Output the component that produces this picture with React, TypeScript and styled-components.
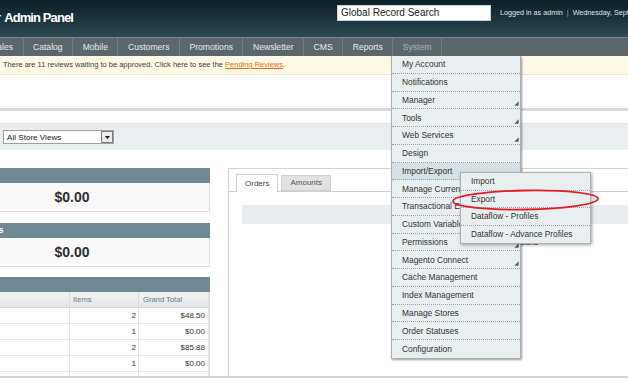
import React from "react";
import styled, { createGlobalStyle } from "styled-components";

const GlobalStyle = createGlobalStyle`
  * { box-sizing: border-box; }
  html, body { margin: 0; padding: 0; background: #fff; }
  body {
    width: 628px;
    height: 381px;
    overflow: hidden;
    font-family: "Liberation Sans", Arial, sans-serif;
    color: #333;
  }
`;

const Page = styled.div`
  position: relative;
  width: 628px;
  height: 381px;
  overflow: hidden;
  display: flex;
  flex-direction: column;
`;

const Header = styled.header`
  height: 37px;
  flex: none;
  display: grid;
  grid-template-columns: 337px 154px 1fr;
  align-items: start;
  padding-top: 5px;
  background: linear-gradient(180deg, #0d1f28 0%, #1b333c 50%, #2e4a54 100%);
  white-space: nowrap;
  overflow: hidden;
`;

const Title = styled.h1`
  margin: 6px 0 0 -4px;
  font-size: 13px;
  line-height: 14px;
  font-weight: bold;
  letter-spacing: -0.9px;
  color: #fff;
`;

const TitleCut = styled.span`
  margin-right: 4px;
`;

const SearchBox = styled.div`
  width: 154px;
  height: 16px;
  border: 1px solid #c9d1d4;
  background: #fff;
  font-size: 10px;
  line-height: 14px;
  color: #222;
  padding-left: 3px;
  overflow: hidden;
`;

const UserInfo = styled.div`
  padding-left: 9px;
  font-size: 7.2px;
  line-height: 16px;
  color: #dfe6e9;
  overflow: hidden;
`;

const Sep = styled.span`
  color: #8fa0a7;
  margin: 0 4px;
`;

const Nav = styled.nav`
  height: 19px;
  flex: none;
  display: flex;
  background: #5c676c;
  border-top: 1px solid #7a868b;
  overflow: hidden;
`;

const NavItem = styled.div<{ $active?: boolean; $offset?: number }>`
  flex: none;
  padding: 0 9.5px;
  margin-left: ${(p) => p.$offset ?? 0}px;
  border-right: 1px solid #727d82;
  font-size: 8.6px;
  line-height: 18px;
  color: ${(p) => (p.$active ? "#a9b4b9" : "#e4e9eb")};
  white-space: nowrap;
`;

const Notice = styled.div`
  height: 19px;
  flex: none;
  background: #fff9e6;
  border-bottom: 1px solid #ede4c8;
  font-size: 7.5px;
  line-height: 18px;
  padding-left: 3px;
  color: #404040;
  white-space: nowrap;
`;

const NoticeLink = styled.a`
  color: #eb6a0a;
  text-decoration: underline;
`;

const Rule = styled.div`
  flex: none;
  margin-top: 33px;
  height: 3px;
  background: #d9d9d9;
`;

const StoreBand = styled.div`
  flex: none;
  margin-top: 12px;
  height: 27px;
  background: #e9eff1;
  border-top: 1px solid #dbe4e7;
  display: flex;
  align-items: flex-start;
  padding: 6px 0 0 3px;
`;

const Select = styled.div`
  width: 111px;
  height: 14px;
  border: 1px solid #a0a0a0;
  background: #fff;
  display: flex;
  align-items: center;
  justify-content: space-between;
  padding-left: 3px;
  font-size: 8.1px;
  color: #222;
`;

const SelectButton = styled.div`
  width: 12px;
  height: 12px;
  border: 1px solid #7d7d7d;
  background: #ececec;
  display: flex;
  align-items: center;
  justify-content: center;
`;

const Content = styled.div`
  flex: none;
  margin-top: 18px;
  height: 208px;
  display: flex;
  gap: 18px;
  overflow: hidden;
`;

const LeftCol = styled.div`
  flex: 0 0 275px;
  margin-left: -66px;
  display: flex;
  flex-direction: column;
`;

const Box = styled.section<{ $mb?: number }>`
  margin-bottom: ${(p) => p.$mb ?? 0}px;
`;

const BoxHead = styled.div`
  height: 15px;
  background: #6f8a93;
  color: #fff;
  font-size: 8.5px;
  font-weight: bold;
  line-height: 15px;
  padding-left: 6px;
  white-space: nowrap;
`;

const BoxBody = styled.div`
  height: 29px;
  background: #fafafa;
  border: 1px solid #dedede;
  border-top: none;
  font-size: 14px;
  font-weight: bold;
  line-height: 28px;
  text-align: center;
  color: #2f2f2f;
`;

const Grid = styled.div`
  display: grid;
  grid-template-columns: 136px 69px 70px;
  border-right: 1px solid #dedede;
`;

const HeadCell = styled.div<{ $pl?: number }>`
  height: 16px;
  background: linear-gradient(180deg, #f2f4f5 0%, #e2e6e8 100%);
  border-bottom: 1px solid #d3d9dc;
  border-right: 1px solid #d9dee0;
  font-size: 7.6px;
  line-height: 15px;
  color: #6a777d;
  padding-left: ${(p) => p.$pl ?? 3}px;
  white-space: nowrap;
`;

const Cell = styled.div<{ $link?: boolean; $pr?: number }>`
  height: 16px;
  background: #fff;
  border-bottom: 1px solid #e6e6e6;
  border-right: 1px solid #e3e3e3;
  font-size: 8px;
  line-height: 15px;
  white-space: nowrap;
  overflow: hidden;
  color: ${(p) => (p.$link ? "#1e7ec8" : "#333")};
  text-align: ${(p) => (p.$link !== undefined ? "left" : "right")};
  padding: 0 ${(p) => p.$pr ?? 3}px 0 3px;
`;

const RightPanel = styled.section`
  flex: 0 0 440px;
  border-top: 1px solid #d3d3d3;
  border-left: 1px solid #d3d3d3;
  display: flex;
  flex-direction: column;
`;

const TabBar = styled.div`
  height: 23px;
  display: flex;
  align-items: flex-end;
  gap: 3px;
  padding-left: 7px;
  border-bottom: 1px solid #cfcfcf;
`;

const Tab = styled.div<{ $active?: boolean }>`
  height: ${(p) => (p.$active ? 18 : 16)}px;
  margin-bottom: ${(p) => (p.$active ? -1 : 0)}px;
  padding: 0 8px;
  border: 1px solid #cfcfcf;
  border-bottom: ${(p) => (p.$active ? "none" : "1px solid #cfcfcf")};
  background: ${(p) => (p.$active ? "#fff" : "#e2e2e2")};
  font-size: 8px;
  line-height: ${(p) => (p.$active ? 17 : 14)}px;
  color: ${(p) => (p.$active ? "#444" : "#555")};
`;

const PanelBody = styled.div`
  padding: 13px 0 0 13px;
`;

const ChartBand = styled.div`
  height: 19px;
  background: #e8eef0;
`;

const NoData = styled.div`
  margin-top: 14px;
  padding-left: 242px;
  font-size: 8px;
  color: #333;
`;

const Footer = styled.div`
  flex: none;
  height: 2px;
  background: #d5d5d5;
`;

const Menu = styled.ul`
  position: absolute;
  left: 391px;
  top: 56px;
  width: 130px;
  margin: 0;
  padding: 0;
  list-style: none;
  background: #e9eff1;
  border: 1px solid #a9b3b7;
  border-top: none;
  box-shadow: 1px 1px 2px rgba(0, 0, 0, 0.4);
`;

const MenuItem = styled.li<{ $hover?: boolean }>`
  height: 17.75px;
  display: flex;
  justify-content: space-between;
  align-items: center;
  padding-left: 10px;
  border-bottom: 1px dotted #98a3a8;
  background: ${(p) => (p.$hover ? "#d6e1e5" : "transparent")};
  font-size: 8.4px;
  color: #333;
  white-space: nowrap;
  &:last-child { border-bottom: none; }
`;

const Arrow = styled.svg`
  align-self: flex-end;
  margin: 0 1px 2px 0;
  flex: none;
`;

const SubMenu = styled.ul`
  position: absolute;
  left: 460px;
  top: 172px;
  width: 131px;
  margin: 0;
  padding: 0;
  list-style: none;
  background: #e9eff1;
  border: 1px solid #a9b3b7;
  box-shadow: 1px 1px 3px rgba(0, 0, 0, 0.35);
`;

const SubItem = styled.li`
  height: 17.5px;
  display: flex;
  align-items: center;
  padding-left: 10px;
  border-bottom: 1px dotted #98a3a8;
  font-size: 8.3px;
  color: #333;
  white-space: nowrap;
  &:last-child { border-bottom: none; }
`;

const Highlight = styled.svg`
  position: absolute;
  left: 450px;
  top: 188px;
  pointer-events: none;
`;

const navItems = [
  "Sales", "Catalog", "Mobile", "Customers", "Promotions", "Newsletter", "CMS", "Reports", "System",
];

const menuItems: { label: string; arrow?: boolean; hover?: boolean }[] = [
  { label: "My Account" },
  { label: "Notifications" },
  { label: "Manager", arrow: true },
  { label: "Tools", arrow: true },
  { label: "Web Services", arrow: true },
  { label: "Design" },
  { label: "Import/Export", hover: true },
  { label: "Manage Currency" },
  { label: "Transactional Emails" },
  { label: "Custom Variables" },
  { label: "Permissions", arrow: true },
  { label: "Magento Connect", arrow: true },
  { label: "Cache Management" },
  { label: "Index Management" },
  { label: "Manage Stores" },
  { label: "Order Statuses" },
  { label: "Configuration" },
];

const subItems = ["Import", "Export", "Dataflow - Profiles", "Dataflow - Advance Profiles"];

const orders = [
  { name: "John Doe", link: false, items: 2, total: "$48.50" },
  { name: "Veronica Costello", link: true, items: 1, total: "$0.00" },
  { name: "Jane Smith", link: false, items: 2, total: "$85.88" },
  { name: "Mike Ross", link: false, items: 1, total: "$0.00" },
  { name: "Anna Lee", link: false, items: 1, total: "$12.00" },
];

const ArrowIcon = () => (
  <Arrow width="5" height="5" viewBox="0 0 5 5">
    <path d="M0.3 4.7 L4.7 0.3 L4.7 4.7 Z" fill="#5a5f62" />
  </Arrow>
);

export default function App() {
  return (
    <>
      <GlobalStyle />
      <Page>
        <Header>
          <Title>
            <TitleCut>r</TitleCut>Admin Panel
          </Title>
          <SearchBox>Global Record Search</SearchBox>
          <UserInfo>
            Logged in as admin<Sep>|</Sep>Wednesday, September 19, 2012
          </UserInfo>
        </Header>
        <Nav>
          {navItems.map((n, i) => (
            <NavItem key={n} $offset={i === 0 ? -18 : 0} $active={n === "System"}>
              {n}
            </NavItem>
          ))}
        </Nav>
        <Notice>
          There are 11 reviews waiting to be approved. Click here to see the{" "}
          <NoticeLink>Pending Reviews</NoticeLink>.
        </Notice>
        <Rule />
        <StoreBand>
          <Select>
            All Store Views
            <SelectButton>
              <svg width="5" height="3" viewBox="0 0 5 3">
                <path d="M0 0 L5 0 L2.5 3 Z" fill="#111" />
              </svg>
            </SelectButton>
          </Select>
        </StoreBand>
        <Content>
          <LeftCol>
            <Box $mb={11}>
              <BoxHead>Lifetime Sales</BoxHead>
              <BoxBody>$0.00</BoxBody>
            </Box>
            <Box $mb={10}>
              <BoxHead>Average Orders</BoxHead>
              <BoxBody>$0.00</BoxBody>
            </Box>
            <Box>
              <BoxHead>Last Orders</BoxHead>
              <Grid>
                <HeadCell>Customer</HeadCell>
                <HeadCell>Items</HeadCell>
                <HeadCell $pl={4}>Grand Total</HeadCell>
                {orders.map((o) => (
                  <React.Fragment key={o.name}>
                    <Cell $link={o.link}>{o.name}</Cell>
                    <Cell $pr={2}>{o.items}</Cell>
                    <Cell>{o.total}</Cell>
                  </React.Fragment>
                ))}
              </Grid>
            </Box>
          </LeftCol>
          <RightPanel>
            <TabBar>
              <Tab $active>Orders</Tab>
              <Tab>Amounts</Tab>
            </TabBar>
            <PanelBody>
              <ChartBand />
              <NoData>No Data Found</NoData>
            </PanelBody>
          </RightPanel>
        </Content>
        <Footer />

        <Menu>
          {menuItems.map((m) => (
            <MenuItem key={m.label} $hover={m.hover}>
              {m.label}
              {m.arrow && <ArrowIcon />}
            </MenuItem>
          ))}
        </Menu>
        <SubMenu>
          {subItems.map((s) => (
            <SubItem key={s}>{s}</SubItem>
          ))}
        </SubMenu>
        <Highlight width="152" height="24" viewBox="0 0 152 24">
          <ellipse
            cx="75.5"
            cy="12"
            rx="72.5"
            ry="9.5"
            fill="none"
            stroke="#e41b23"
            strokeWidth="1.8"
            transform="rotate(-1 75.5 12)"
          />
        </Highlight>
      </Page>
    </>
  );
}
